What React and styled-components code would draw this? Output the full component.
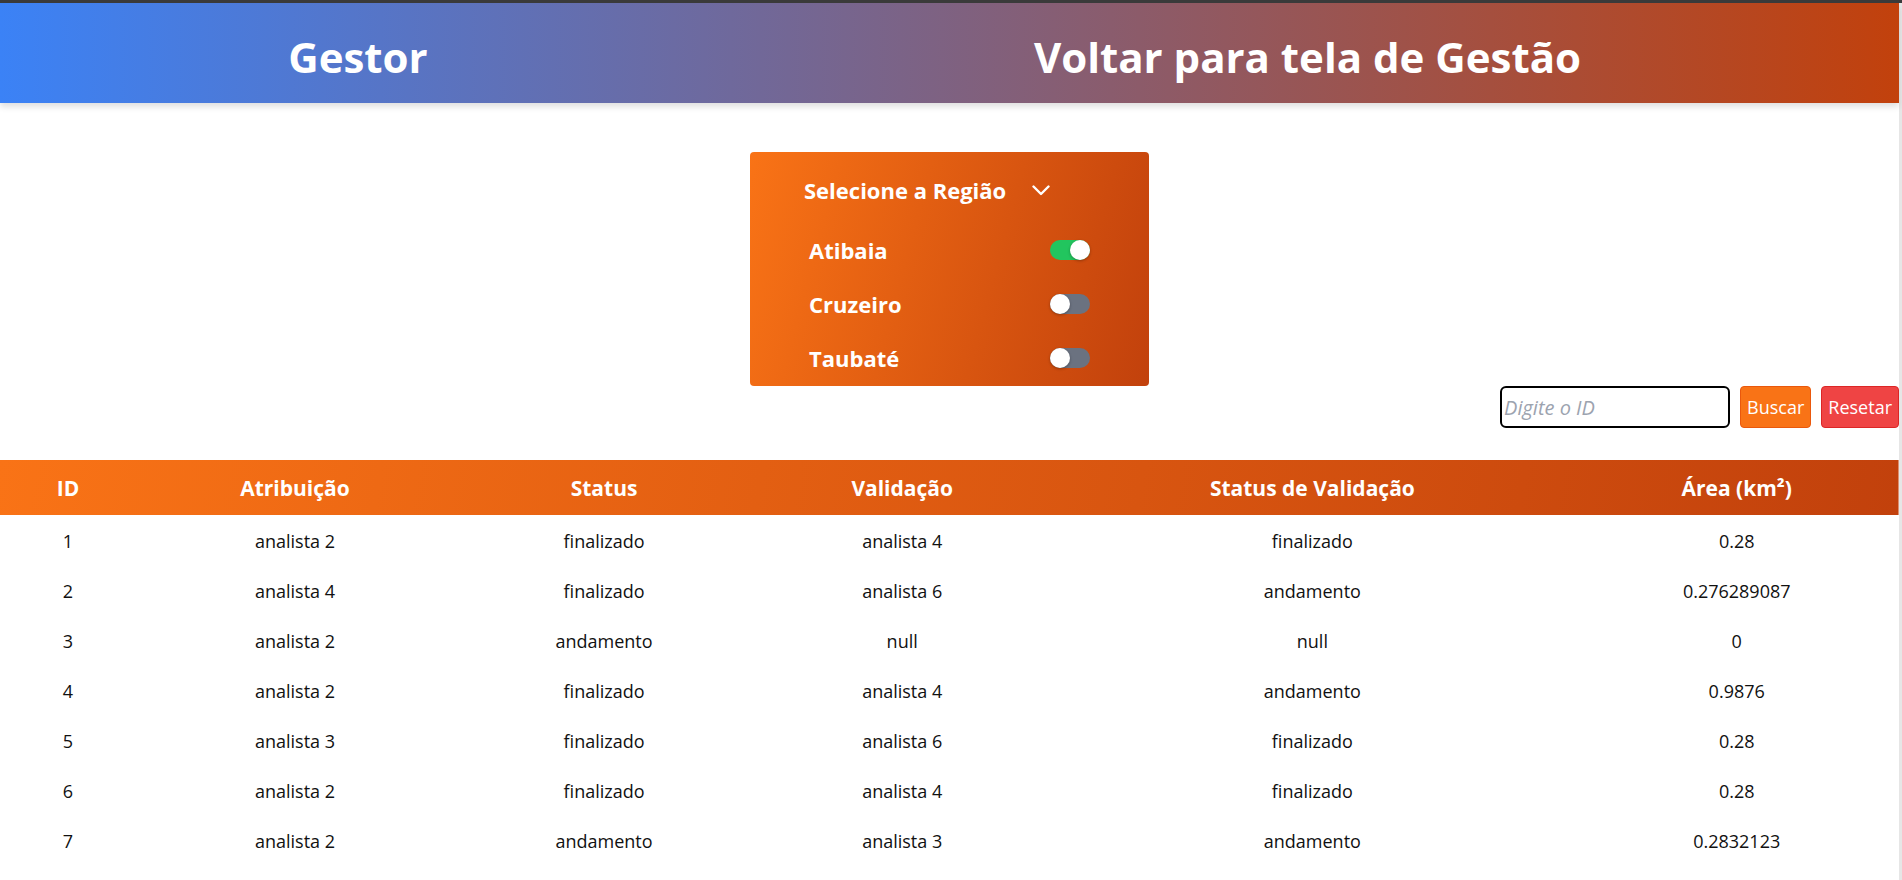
import styled, { createGlobalStyle } from "styled-components"

const GlobalStyle = createGlobalStyle`
  html, body {
    margin: 0;
    padding: 0;
    height: 100%;
    overflow: hidden;
  }
  body {
    border-top: 3px solid #3a3a3a;
    background: #e6e6e6;
    font-family: "Open Sans", "Liberation Sans", sans-serif;
    color: #1a1a1a;
  }
  * {
    box-sizing: border-box;
  }
`

const Page = styled.div`
  margin-right: 3px;
  min-height: 877px;
  background: #fff;
`

const Header = styled.header`
  height: 100px;
  padding-top: 6px;
  display: grid;
  grid-template-columns: 37.7% 1fr;
  align-items: center;
  justify-items: center;
  background: linear-gradient(to right, #3b82f6, #c2410c);
  box-shadow: 0 4px 6px rgba(0, 0, 0, 0.12);
  position: relative;
  z-index: 1;
`

const NavLink = styled.a`
  color: #fff;
  font-size: 42px;
  font-weight: 700;
  text-decoration: none;
  cursor: pointer;
`

const Main = styled.main`
  padding-top: 49px;
  display: flex;
  flex-direction: column;
`

const Panel = styled.div`
  align-self: center;
  width: 399px;
  height: 234px;
  padding: 16px 59px 0 54px;
  border-radius: 4px;
  background: linear-gradient(105deg, #f97316, #c2410c);
  color: #fff;
`

const PanelTitle = styled.button`
  height: 44px;
  padding: 0;
  display: flex;
  align-items: center;
  gap: 26px;
  border: none;
  background: none;
  color: #fff;
  font-family: inherit;
  font-size: 22px;
  font-weight: 700;
  cursor: pointer;
`

const RegionList = styled.ul`
  list-style: none;
  margin: 11px 0 0;
  padding: 0;
`

const RegionItem = styled.li`
  height: 54px;
  padding-left: 5px;
  display: flex;
  align-items: center;
  justify-content: space-between;
  font-size: 22px;
  font-weight: 700;
`

const Toggle = styled.span`
  position: relative;
  width: 40px;
  height: 20px;
  border-radius: 10px;
  background: ${(p) => (p.$on ? "#22c55e" : "#6b7280")};

  &::after {
    content: "";
    position: absolute;
    top: 0;
    left: ${(p) => (p.$on ? "20px" : "0")};
    width: 20px;
    height: 20px;
    border-radius: 50%;
    background: #fff;
    box-shadow: 0 1px 3px rgba(0, 0, 0, 0.3);
  }
`

const SearchRow = styled.div`
  display: flex;
  justify-content: flex-end;
  gap: 10px;
  height: 42px;
`

const SearchInput = styled.input`
  width: 230px;
  height: 42px;
  padding: 0 2px;
  border: 2px solid #000;
  border-radius: 6px;
  font-family: inherit;
  font-size: 20px;

  &::placeholder {
    color: #9ca3af;
    font-style: italic;
  }
`

const ActionButton = styled.button`
  height: 42px;
  padding: 0 6px;
  border: 1px solid ${(p) => p.$border};
  border-radius: 4px;
  background: ${(p) => p.$bg};
  color: #fff;
  font-family: inherit;
  font-size: 18px;
  cursor: pointer;
`

const Table = styled.table`
  width: 100%;
  margin-top: 32px;
  border-collapse: collapse;
  table-layout: fixed;
`

const HeadRow = styled.tr`
  background: linear-gradient(100deg, #f97316, #c2410c);
`

const Th = styled.th`
  width: ${(p) => p.$w};
  height: 55px;
  padding: 0;
  color: #fff;
  font-size: 21px;
  font-weight: 700;
  text-align: center;
`

const Td = styled.td`
  height: 50px;
  padding: 0;
  padding-top: 2px;
  font-size: 18px;
  text-align: center;
  color: #111;
`

const columns = [
  { label: "ID", w: "7.16%" },
  { label: "Atribuição", w: "16.75%" },
  { label: "Status", w: "15.8%" },
  { label: "Validação", w: "15.6%" },
  { label: "Status de Validação", w: "27.6%" },
  { label: "Área (km²)", w: "17.09%" },
]

const rows = [
  [1, "analista 2", "finalizado", "analista 4", "finalizado", "0.28"],
  [2, "analista 4", "finalizado", "analista 6", "andamento", "0.276289087"],
  [3, "analista 2", "andamento", "null", "null", "0"],
  [4, "analista 2", "finalizado", "analista 4", "andamento", "0.9876"],
  [5, "analista 3", "finalizado", "analista 6", "finalizado", "0.28"],
  [6, "analista 2", "finalizado", "analista 4", "finalizado", "0.28"],
  [7, "analista 2", "andamento", "analista 3", "andamento", "0.2832123"],
]

const regions = [
  { name: "Atibaia", on: true },
  { name: "Cruzeiro", on: false },
  { name: "Taubaté", on: false },
]

const Chevron = () => (
  <svg width="18" height="11" viewBox="0 0 18 11" fill="none">
    <polyline
      points="1.5,1.5 9,9 16.5,1.5"
      stroke="#fff"
      strokeWidth="2.4"
      strokeLinecap="round"
      strokeLinejoin="round"
    />
  </svg>
)

const App = () => {
  return (
    <Page>
      <GlobalStyle />
      <Header>
        <NavLink>Gestor</NavLink>
        <NavLink>Voltar para tela de Gestão</NavLink>
      </Header>
      <Main>
        <Panel>
          <PanelTitle>
            Selecione a Região
            <Chevron />
          </PanelTitle>
          <RegionList>
            {regions.map((r) => (
              <RegionItem key={r.name}>
                {r.name}
                <Toggle $on={r.on} />
              </RegionItem>
            ))}
          </RegionList>
        </Panel>
        <SearchRow>
          <SearchInput placeholder="Digite o ID" />
          <ActionButton $bg="#f97316" $border="#ea580c">Buscar</ActionButton>
          <ActionButton $bg="#ef4444" $border="#dc2626">Resetar</ActionButton>
        </SearchRow>
        <Table>
          <thead>
            <HeadRow>
              {columns.map((c) => (
                <Th key={c.label} $w={c.w}>{c.label}</Th>
              ))}
            </HeadRow>
          </thead>
          <tbody>
            {rows.map((r) => (
              <tr key={r[0]}>
                {r.map((cell, i) => (
                  <Td key={i}>{cell}</Td>
                ))}
              </tr>
            ))}
          </tbody>
        </Table>
      </Main>
    </Page>
  )
}

export default App
